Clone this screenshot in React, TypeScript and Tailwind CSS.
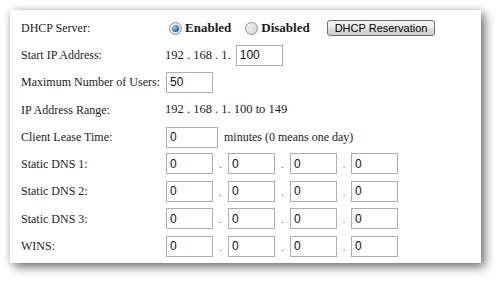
const serif = "font-['Liberation_Serif','Times_New_Roman',serif]";
const sans = "font-['Liberation_Sans',Arial,sans-serif]";

function Field({ value, w = "w-[47px]" }: { value: string; w?: string }) {
  return (
    <div
      className={`${w} h-[21px] border border-[#abadb3] bg-white pl-[3px] flex items-center text-[12px] text-[#111] ${sans}`}
    >
      {value}
    </div>
  );
}

function Radio({ checked }: { checked?: boolean }) {
  return (
    <span className="w-[13px] h-[13px] rounded-full border border-[#8e8f8f] bg-gradient-to-br from-[#f4f4f4] to-[#d4d4d4] flex items-center justify-center">
      {checked && (
        <span className="w-[7px] h-[7px] rounded-full bg-[radial-gradient(circle_at_35%_35%,#9fd3f5,#2a7fc0_55%,#0d4a7c)]" />
      )}
    </span>
  );
}

function IpFields() {
  return (
    <div className="flex items-center">
      <Field value="0" />
      <span className="w-[15px] text-center text-[#555] text-[10px] pt-[2px]">.</span>
      <Field value="0" />
      <span className="w-[15px] text-center text-[#555] text-[10px] pt-[2px]">.</span>
      <Field value="0" />
      <span className="w-[14px] text-center text-[#555] text-[10px] pt-[2px]">.</span>
      <Field value="0" />
    </div>
  );
}

function Row({ label, h, children }: { label: string; h: string; children: React.ReactNode }) {
  return (
    <div className={`flex items-center ${h}`}>
      <div className="w-[145px] shrink-0">{label}</div>
      <div className="flex items-center">{children}</div>
    </div>
  );
}

export default function App() {
  return (
    <div className="w-[500px] h-[283px] bg-white pt-[10px] pl-[10px]">
      <div
        className={`w-[471px] h-[253px] bg-white pl-[11px] pt-[5px] text-[12px] text-[#1c1c1c] ${serif} shadow-[4px_4px_10px_rgba(0,0,0,0.55),0_0_6px_rgba(0,0,0,0.12)]`}
      >
        <Row label="DHCP Server:" h="h-[26px]">
          <div className="flex items-center ml-[3px]">
            <Radio checked />
            <span className="ml-[3px] font-bold text-[13px]">Enabled</span>
            <span className="ml-[14px]">
              <Radio />
            </span>
            <span className="ml-[3px] font-bold text-[13px]">Disabled</span>
            <button
              className={`ml-[17px] h-[16px] px-[7px] rounded-[3px] border border-[#707070] bg-[linear-gradient(#f3f3f3_0%,#ebebeb_50%,#dddddd_51%,#cfcfcf_100%)] text-[11px] leading-none text-black ${sans}`}
            >
              DHCP Reservation
            </button>
          </div>
        </Row>
        <Row label="Start IP Address:" h="h-[28px]">
          <span className="-ml-[1px] text-[12.5px] whitespace-pre">192 . 168 . 1. </span>
          <span className="ml-[2px]">
            <Field value="100" />
          </span>
        </Row>
        <Row label="Maximum Number of Users:" h="h-[26px]">
          <Field value="50" />
        </Row>
        <Row label="IP Address Range:" h="h-[29px]">
          <span className="-ml-[1px] text-[12.5px] whitespace-pre">192 . 168 . 1. 100 to 149</span>
        </Row>
        <Row label="Client Lease Time:" h="h-[26px]">
          <Field value="0" w="w-[52px]" />
          <span className="ml-[6px]">minutes (0 means one day)</span>
        </Row>
        <Row label="Static DNS 1:" h="h-[27px]">
          <IpFields />
        </Row>
        <Row label="Static DNS 2:" h="h-[28px]">
          <IpFields />
        </Row>
        <Row label="Static DNS 3:" h="h-[27px]">
          <IpFields />
        </Row>
        <Row label="WINS:" h="h-[28px]">
          <IpFields />
        </Row>
      </div>
    </div>
  );
}
